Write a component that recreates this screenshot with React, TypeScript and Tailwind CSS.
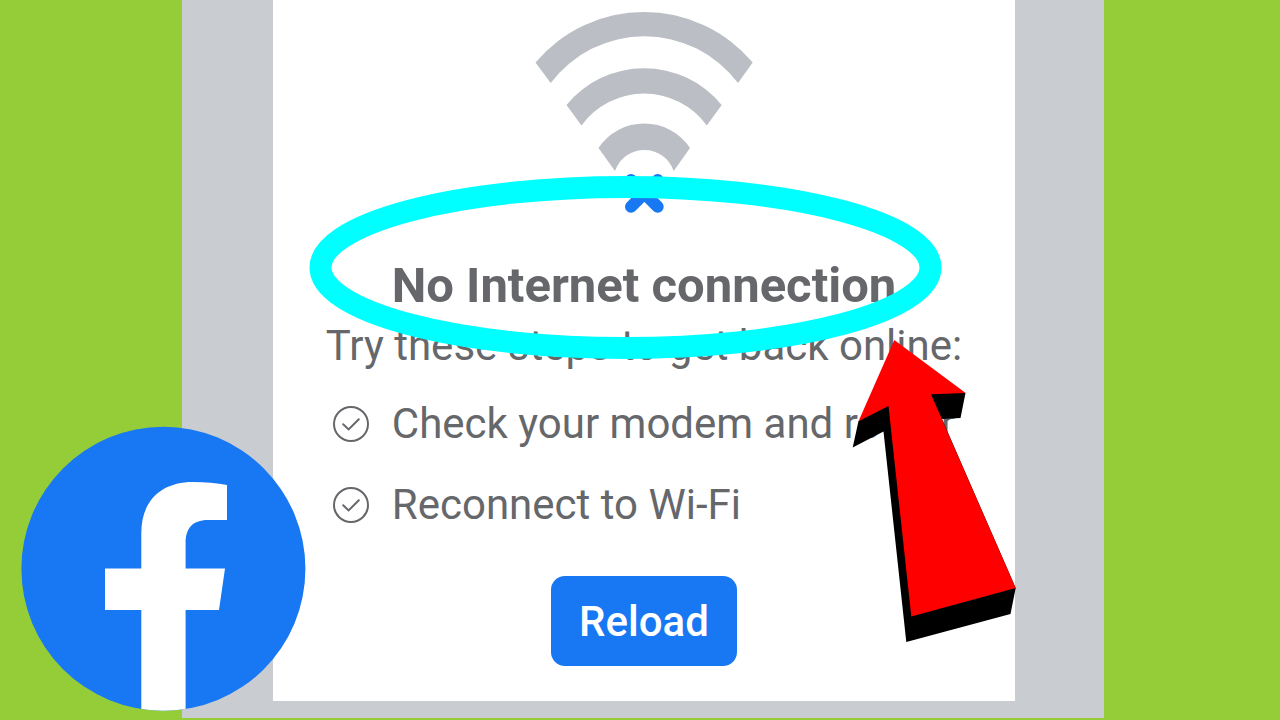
const steps = ['Check your modem and router', 'Reconnect to Wi-Fi'];

function WifiOff() {
  return (
    <svg className="h-[216px] w-[220px]" viewBox="534 0 220 216" aria-hidden="true">
      <g fill="#bbbec4">
        <path d="M535.5 62.5A142 142 0 0 1 752.7 62.5L738 83A117.2 117.2 0 0 0 550.7 83Z" />
        <path d="M566.5 105A100.2 100.2 0 0 1 721.7 105L706.8 125.5A77.3 77.3 0 0 0 581.5 125.5Z" />
        <path d="M598.5 148A54.9 54.9 0 0 1 690 148L673.7 171A31 31 0 0 0 615 171Z" />
      </g>
      <path d="M631 180L657.7 206.7M657.7 180L631 206.7" stroke="#1877f2" strokeWidth="12" strokeLinecap="round" />
    </svg>
  );
}

function CheckIcon() {
  return (
    <svg className="size-[38px] shrink-0" viewBox="0 0 38 38" fill="none" stroke="#65676b" strokeWidth="2" strokeLinecap="round" aria-hidden="true">
      <circle cx="19" cy="19" r="17" />
      <path d="M11.2 19.3L16.6 24.4L26.8 14.3" />
    </svg>
  );
}

function Highlight() {
  return (
    <svg className="pointer-events-none absolute top-[175px] left-[35px] h-[185px] w-[635px]" viewBox="308 175 635 185" aria-hidden="true">
      <ellipse cx="625.5" cy="267.5" rx="305" ry="80.5" fill="none" stroke="#00ffff" strokeWidth="22" />
    </svg>
  );
}

function Arrow() {
  return (
    <svg className="pointer-events-none absolute top-[338px] left-[577px] h-[306px] w-[168px]" viewBox="850 338 168 306" aria-hidden="true">
      <path d="M858.5 421L852.7 447.5L883.5 431.5L906.3 642L1010.5 614L1015.7 588L942 419L960.5 418L965.5 393L931 393L888 404Z" fill="#000" />
      <path d="M894.3 340L965.7 393L931 394.3L1015.7 588L911.3 616.5L888.5 406L858.5 421.3Z" fill="#ff0000" />
    </svg>
  );
}

function FacebookLogo() {
  return (
    <svg className="absolute top-[426px] left-[21px] size-[286px]" viewBox="21 426 286 286" role="img" aria-label="Facebook">
      <defs>
        <clipPath id="disc">
          <circle cx="163.4" cy="568.8" r="142" />
        </clipPath>
      </defs>
      <circle cx="163.4" cy="568.8" r="142" fill="#1877f2" />
      <path
        clipPath="url(#disc)"
        fill="#fff"
        d="M141.3 712V610H105V568.5H141.3V533C141.3 501 161 482 193 482C205 482 217 483.2 227 485V520H208C192 520 185.6 529 185.6 543V568.5H225L219 610H185.6V712Z"
      />
    </svg>
  );
}

export default function App() {
  return (
    <div className="relative min-h-screen bg-[#95cd39] pr-[176px] pb-[2px] pl-[182px] font-['Roboto',sans-serif]">
      <div className="bg-[#c9ccd1] pr-[89px] pb-[17px] pl-[91px]">
        <main className="relative flex flex-col items-center bg-white pb-[35px] text-[#65676b]">
          <WifiOff />
          <h1 className="mt-10 text-[49px] leading-[60px] font-bold whitespace-nowrap">No Internet connection</h1>
          <div className="text-[42px] leading-[60px] whitespace-nowrap">
            <p>Try these steps to get back online:</p>
            <ul className="mt-[18px] flex flex-col gap-[21px] pl-1.5">
              {steps.map((step) => (
                <li key={step} className="flex items-center gap-[22px]">
                  <CheckIcon />
                  {step}
                </li>
              ))}
            </ul>
          </div>
          <button type="button" className="mt-[41px] h-[90px] w-[186px] rounded-[14px] bg-[#1877f2] text-[42px] font-medium text-white">
            Reload
          </button>
          <Highlight />
          <Arrow />
        </main>
      </div>
      <FacebookLogo />
    </div>
  );
}
